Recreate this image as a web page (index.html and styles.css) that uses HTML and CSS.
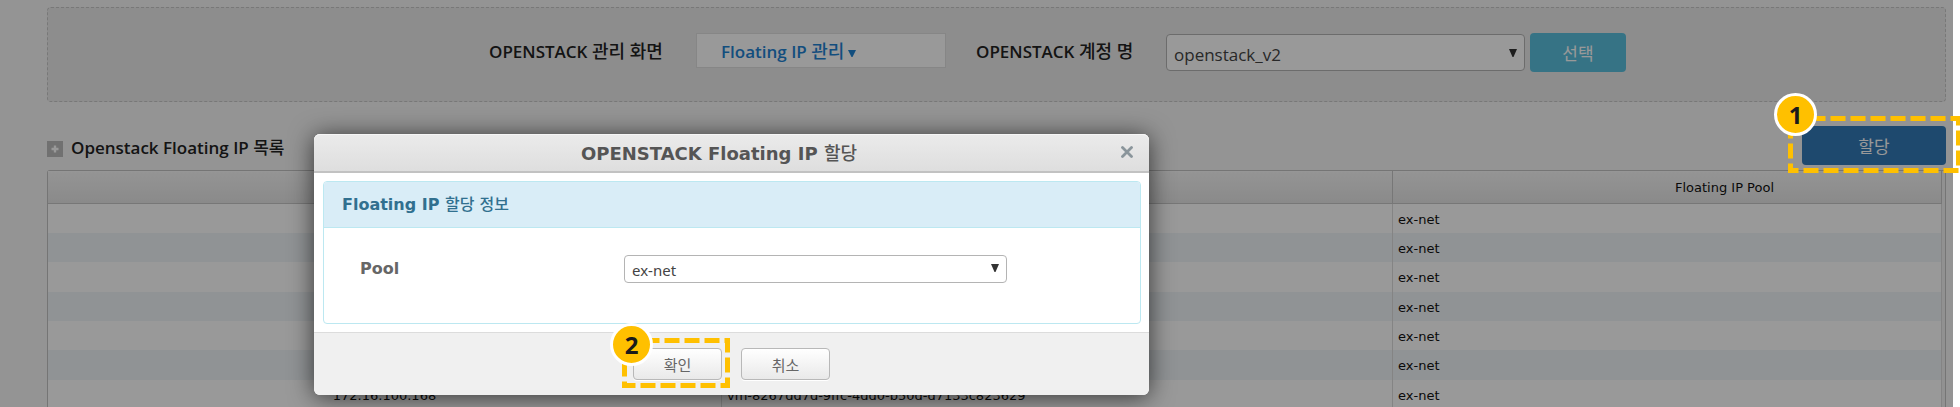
FILE: index.html
```html
<!DOCTYPE html>
<html lang="ko">
<head>
<meta charset="utf-8">
<title>OPENSTACK Floating IP</title>
<link rel="stylesheet" href="styles.css">
</head>
<body>
<div class="app">
  <form class="filter">
    <span class="filter-label" id="screen-label">OPENSTACK <span class="hangul">관리 화면</span></span>
    <button type="button" class="screen-menu" aria-labelledby="screen-label screen-value">
      <span id="screen-value">Floating IP <span class="hangul">관리</span></span>
      <svg class="caret" viewBox="0 0 8 8" aria-hidden="true"><path d="M0 1h8L4.5 8h-1z"/></svg>
    </button>
    <label class="filter-label filter-label-account" for="account">OPENSTACK <span class="hangul">계정 명</span></label>
    <span class="select-wrap account-wrap">
      <select id="account" class="select account-select"><option>openstack_v2</option></select>
      <svg class="arrow" viewBox="0 0 8 8" aria-hidden="true"><path d="M0 0h8L4.5 8h-1z"/></svg>
    </span>
    <button type="button" class="btn btn-info">선택</button>
  </form>

  <div class="title-row">
    <svg class="title-icon" viewBox="0 0 16 16" aria-hidden="true"><rect width="16" height="16" fill="#bcbcbc"/><path d="M8 4.5v7M4.5 8h7" stroke="#fff" stroke-width="2.4"/></svg>
    <h2 class="title">Openstack Floating IP <span class="hangul">목록</span></h2>
    <div class="allocate">
      <button type="button" class="btn btn-primary">할당</button>
      <div class="callout callout-allocate">
        <svg class="callout-box"><rect class="callout-line" x="2.5" y="2.5"/></svg>
        <span class="callout-number">1</span>
      </div>
    </div>
  </div>

  <div class="grid">
    <table class="table">
      <colgroup><col class="col-ip"><col class="col-vm"><col></colgroup>
      <thead><tr><th></th><th></th><th class="head-pool">Floating IP Pool</th></tr></thead>
      <tbody>
        <tr><td></td><td></td><td>ex-net</td></tr>
        <tr><td></td><td></td><td>ex-net</td></tr>
        <tr><td></td><td></td><td>ex-net</td></tr>
        <tr><td></td><td></td><td>ex-net</td></tr>
        <tr><td></td><td></td><td>ex-net</td></tr>
        <tr><td></td><td></td><td>ex-net</td></tr>
        <tr><td class="cell-ip">172.16.100.168</td><td>vm-8267dd7d-9ffc-4dd0-b50d-d7133c823629</td><td>ex-net</td></tr>
      </tbody>
    </table>
  </div>
  <div class="backdrop"></div>
</div>

<div class="modal" role="dialog" aria-labelledby="modal-title">
  <div class="modal-header">
    <h3 class="modal-title" id="modal-title">OPENSTACK Floating IP <span class="hangul">할당</span></h3>
    <button type="button" class="close" aria-label="닫기"><svg class="close-icon" viewBox="0 0 12 12"><path d="M1.5 1.5l9 9M10.5 1.5l-9 9" stroke="#8a959b" stroke-width="2.8" stroke-linecap="round"/></svg></button>
  </div>
  <div class="modal-body">
    <section class="panel">
      <h4 class="panel-heading">Floating IP <span class="hangul">할당 정보</span></h4>
      <div class="panel-body">
        <label class="pool-label" for="pool">Pool</label>
        <span class="select-wrap pool-wrap">
          <select id="pool" class="select pool-select"><option>ex-net</option></select>
          <svg class="arrow" viewBox="0 0 8 8" aria-hidden="true"><path d="M0 0h8L4.5 8h-1z"/></svg>
        </span>
      </div>
    </section>
  </div>
  <div class="modal-footer">
    <div class="confirm">
      <button type="button" class="btn-plain">확인</button>
      <div class="callout callout-confirm">
        <svg class="callout-box"><rect class="callout-line" x="2.5" y="2.5"/></svg>
        <span class="callout-number">2</span>
      </div>
    </div>
    <button type="button" class="btn-plain">취소</button>
  </div>
</div>
</body>
</html>
```
FILE: styles.css
```css
* { box-sizing: border-box; }
html { overflow: hidden; }
body { margin: 0; background: #fff; font-family: "Open Sans", "Noto Sans CJK KR", sans-serif; }
h2, h3, h4 { margin: 0; }
button, select { font-family: inherit; margin: 0; }

.app {
  position: relative;
  min-height: 100vh;
  margin-right: 7px;
  padding: 7px 7px 0 47px;
  background: #f7f7f7;
}
.backdrop { position: absolute; inset: 0; z-index: 1; background: rgba(0, 0, 0, .4); }

.filter {
  display: flex;
  justify-content: center;
  height: 95px;
  padding: 25px 0 0 122px;
  border: 1px dashed #c8c8c8;
  border-radius: 4px;
  background: #ececec;
}
.filter-label { width: 207px; font-size: 17px; line-height: 36px; font-weight: 600; color: #222; white-space: nowrap; }
.filter-label-account { width: 190px; margin-left: 30px; }
.hangul { font-weight: 500; }
.filter .hangul { font-size: 18px; }
.screen-menu {
  display: flex;
  align-items: center;
  gap: 4px;
  width: 250px;
  height: 35px;
  padding: 0 24px 2px;
  border: 1px solid #e0e0e0;
  background: #fff;
  color: #1f82d2;
  font-size: 17px;
  font-weight: 600;
}
.caret { width: 8px; height: 8px; margin-top: 6px; fill: currentColor; }

.select-wrap { position: relative; display: block; }
.select {
  appearance: none;
  display: block;
  width: 100%;
  border: 1px solid #b4b4b4;
  border-radius: 4px;
  background: #fff;
  color: #444;
}
.arrow { position: absolute; width: 8px; height: 8px; fill: #333; pointer-events: none; }
.account-wrap { width: 359px; padding-top: 1px; }
.account-select { height: 37px; padding: 3px 7px 0; font-size: 17px; }
.account-wrap .arrow { right: 8px; top: 16px; }

.btn { display: block; height: 39px; border: 0; border-radius: 4px; color: #fff; font-size: 17px; }
.btn-info { width: 96px; margin-left: 5px; background: #5bc0de; }
.btn-primary { width: 144px; background: #337ab7; }

.title-row { display: flex; align-items: center; margin-top: 24px; height: 39px; }
.title-icon { width: 16px; height: 16px; margin-top: 7px; }
.title { flex: 1; margin: 4px 0 0 8px; font-size: 17px; line-height: 24px; font-weight: 600; color: #222; }
.allocate, .confirm { position: relative; }

.callout { position: absolute; z-index: 2; pointer-events: none; }
.callout-allocate { inset: -10px -15px -8px -14px; }
.callout-confirm { inset: -10px -8px -8px -11px; }
.callout-box { display: block; width: 100%; height: 100%; }
.callout-line { width: calc(100% - 5px); height: calc(100% - 5px); fill: none; stroke: #ffc000; stroke-width: 5; stroke-dasharray: 15 5; }
.callout-number {
  position: absolute;
  left: -14px;
  top: -23px;
  width: 43px;
  height: 43px;
  border: 3px solid #fff;
  border-radius: 50%;
  background: #ffc000;
  color: #1a1a1a;
  font-family: "Open Sans", sans-serif;
  font-size: 24px;
  line-height: 37px;
  font-weight: 700;
  text-align: center;
}
.callout-confirm .callout-number { left: -12px; top: -15px; }

.grid { margin-top: 5px; padding-right: 3px; border: 1px solid #c4c4c4; border-bottom: 0; border-top-left-radius: 3px; background: #f2f2f2; }
.table { width: 100%; table-layout: fixed; border-collapse: separate; border-spacing: 0; font-family: "DejaVu Sans", "Noto Sans CJK KR", sans-serif; font-size: 13px; color: #111; }
.col-ip { width: 674px; }
.col-vm { width: 671px; }
.table th { height: 33px; padding: 0; border-right: 1px solid #c6c6c6; border-bottom: 1px solid #c6c6c6; background: linear-gradient(#f8f8f8, #e6e6e6); font-weight: 400; box-shadow: inset 0 1px #fafafa; }
.table .head-pool { padding-left: 115px; }
.table td { height: 29px; padding: 1px 5px 0; border-right: 1px solid #dcdcdc; background: #fff; }
.table tr:nth-child(3n) td { height: 30px; }
.table tr:nth-child(even) td { background: #f1f5f8; }
.table .cell-ip { text-align: center; }

.modal {
  position: absolute;
  left: 314px;
  top: 134px;
  z-index: 2;
  width: 835px;
  border-radius: 6px;
  background: #fff;
  box-shadow: 0 2px 24px rgba(0, 0, 0, .65);
  font-family: "DejaVu Sans", "Noto Sans CJK KR", sans-serif;
}
.modal-header {
  position: relative;
  height: 39px;
  padding-right: 25px;
  border-bottom: 2px solid #c2c2c2;
  border-radius: 6px 6px 0 0;
  background: linear-gradient(#ebebeb, #dedede);
  box-shadow: inset 0 1px #f6f6f6;
}
.modal-title { font-size: 18px; line-height: 39px; font-weight: 700; color: #555; text-align: center; }
.close { position: absolute; right: 16px; top: 12px; width: 12px; height: 12px; padding: 0; border: 0; background: none; }
.close-icon { display: block; }
.modal-body { padding: 8px 8px 8px 9px; }
.panel { border: 1px solid #bce8f1; border-radius: 4px; }
.panel-heading { padding: 10px 18px; border-bottom: 1px solid #bce8f1; border-radius: 3px 3px 0 0; background: #d9edf7; color: #31708f; font-size: 16px; line-height: 25px; font-weight: 700; }
.panel-body { display: flex; padding: 27px 36px 40px; }
.pool-label { width: 264px; font-size: 16px; line-height: 28px; font-weight: 700; color: #666; }
.pool-wrap { width: 383px; }
.pool-select { height: 28px; padding: 1px 7px 0; font-family: "Noto Sans", "Noto Sans CJK KR", sans-serif; font-size: 15px; }
.pool-wrap .arrow { right: 8px; top: 9px; }
.modal-footer {
  display: flex;
  justify-content: center;
  gap: 19px;
  padding: 15px 0;
  border-top: 1px solid #dcdcdc;
  border-radius: 0 0 6px 6px;
  background: #f0f0f0;
}
.btn-plain { display: block; width: 89px; height: 32px; padding: 0; border: 1px solid #b8b8b8; border-radius: 4px; background: linear-gradient(#fff, #e9e9e9); box-shadow: 0 1px #fff; color: #666; font-size: 15px; }
```
